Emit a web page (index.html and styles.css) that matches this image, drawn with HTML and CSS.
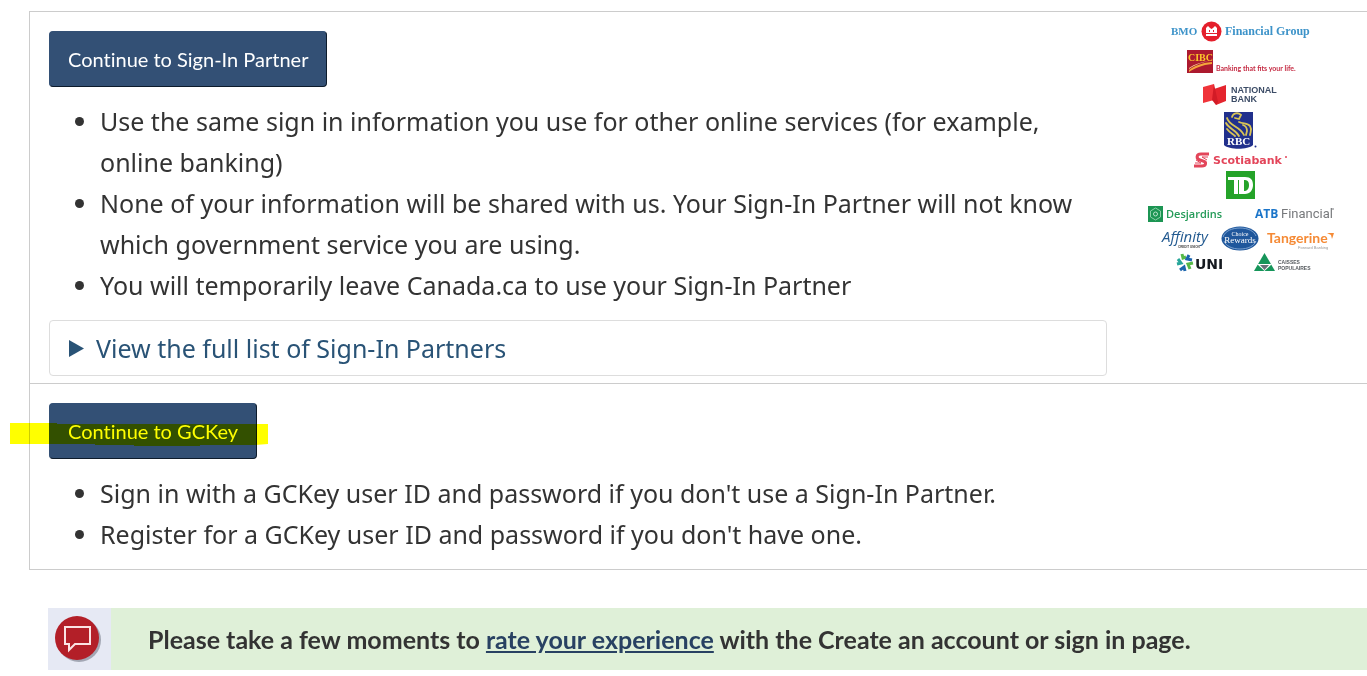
FILE: index.html
```html
<!DOCTYPE html>
<html lang="en">
<head>
<meta charset="utf-8">
<meta name="viewport" content="width=device-width, initial-scale=1">
<title>Create an account or sign in</title>
<link rel="stylesheet" href="styles.css">
</head>
<body>
<main class="options">
  <section class="option option-partner">
    <div class="option-body">
      <button type="button" class="btn">Continue to Sign-In Partner</button>
      <ul class="points">
        <li>Use the same sign in information you use for other online services (for example, online banking)</li>
        <li>None of your information will be shared with us. Your Sign-In Partner will not know which government service you are using.</li>
        <li>You will temporarily leave Canada.ca to use your Sign-In Partner</li>
      </ul>
      <details class="partners">
        <summary><svg class="arrow" viewBox="0 0 15 17" aria-hidden="true"><path d="M0 0 15 8.500 0 17Z" fill="#295376"/></svg>View the full list of Sign-In Partners</summary>
      </details>
    </div>
    <svg class="logos" viewBox="0 0 200 270" role="img" aria-label="Sign-In Partner logos">
      <g class="serif" font-weight="bold" fill="#3d93c9">
        <text x="31" y="25" font-size="11">BMO</text>
        <text x="85" y="25" font-size="12">Financial Group</text>
      </g>
      <circle cx="71.500" cy="21.500" r="10" fill="#e4202c"/>
      <path d="M66 26v-8l2-2 2 2 1.500 1 1.500-1 2-2 2 2v8Z" fill="#fff"/>
      <path d="M66 23.500h11M69.500 20v2M73.500 20v2" stroke="#e4202c" stroke-width="1"/>

      <path d="M47 40h26v23H47Z" fill="#ac1a2f"/>
      <path d="M49 60c5-4 12-7 23-8v2c-10 1-17 4-23 8Z" fill="#f3a73b"/>
      <path d="M49 58c6-4 12-6 20-7-9 2-14 4-20 8Z" fill="#f9d79a"/>
      <text class="serif" x="48" y="51" font-size="10" font-weight="bold" fill="#fcc72c">CIBC</text>
      <text class="lato" x="76" y="61" font-size="7" font-weight="bold" fill="#c52b43">Banking that fits your life.</text>

      <path d="M63 77 74 74v16l-11 3Z" fill="#f0343a"/>
      <path d="M74 79 86 75v16l-10 4Z" fill="#e4252e"/>
      <path d="m74 74 4 18-2 3-4-5Z" fill="#d21b26"/>
      <g class="sans" font-weight="bold" font-size="9" fill="#3c4c66">
        <text x="91" y="83">NATIONAL</text>
        <text x="91" y="92">BANK</text>
      </g>

      <path d="M84 102h29v33c-5 5-24 5-29 0Z" fill="#21308c"/>
      <g fill="none" stroke="#d9c456" stroke-width="1.800" stroke-linecap="round">
        <path d="M87 108c2 8 13 8 17 17"/>
        <path d="M86 113c3 6 10 7 13 13"/>
        <path d="M87 119c3 4 6 5 8 7"/>
        <path d="M92 107c1-4 6-5 9-2l-2 4-4-1"/>
        <path d="M99 112c4 2 9 1 11 4s1 4 0 9"/>
        <path d="M103 115c3 1 4 3 4 6l-1 4"/>
      </g>
      <text class="serif" x="87" y="135" font-size="11" font-weight="bold" fill="#fff">RBC</text>
      <circle cx="115.500" cy="136.500" r="1" fill="#21308c"/>

      <g fill="none" stroke="#e3455a">
        <path d="M69 144H61c-5 0-5 5-1 6l3 1c4 1 3 5-1 5h-8" stroke-width="3"/>
        <path d="M68 147h-6l5 3M55 153h6l-5-3" stroke-width="1"/>
      </g>
      <text class="dejavu" x="73" y="154" font-size="11" font-weight="bold" fill="#e3455a">Scotiabank</text>
      <circle cx="146" cy="147" r="1" fill="#e3455a"/>

      <path d="M86 161h29v28H86Z" fill="#25a329"/>
      <path d="M88 167h14v3h-4v14h-4v-14h-6Z" fill="#fff"/>
      <path d="M99 167h6c6 0 8 3 8 8s-3 9-8 9h-6Zm5 3v11c3 0 5-2 5-6s-2-5-5-5Z" fill="#fff" fill-rule="evenodd"/>
      <path d="M98.500 170v14" stroke="#25a329" stroke-width="1"/>

      <path d="M8 196h15v16H8Z" fill="#1c9553"/>
      <path d="m15.500 198 5 3v6l-5 3-5-3v-6Z" fill="none" stroke="#8bd0a8" stroke-width="1"/>
      <circle cx="15.500" cy="204" r="2" fill="none" stroke="#b9e3ca"/>
      <text class="humanist" x="26" y="208" font-size="11" font-weight="600" fill="#249b58">Desjardins</text>

      <text class="humanist" x="115" y="208" font-size="12" font-weight="bold" fill="#1b75c9">ATB</text>
      <text class="roboto" x="141" y="208" font-size="13" fill="#77797c">Financial</text>
      <path d="M193 198v2" stroke="#77797c"/>

      <text class="humanist" x="22" y="232" font-size="15" font-style="italic" fill="#235a90">Affinity</text>
      <text class="sans" x="38" y="238" font-size="3" font-weight="bold" fill="#444">CREDIT UNION</text>
      <ellipse cx="100" cy="228.500" rx="18.500" ry="12" fill="#1f579c"/>
      <path d="M83 227c2-6 9-9 17-9s14 3 16 8M84 231c2 5 8 8 16 8s14-3 16-8" fill="none" stroke="#7aa1d0" stroke-width="1"/>
      <g class="serif" fill="#fff" text-anchor="middle">
        <text x="100" y="226" font-size="6">Choice</text>
        <text x="100" y="233" font-size="9">Rewards</text>
      </g>
      <text class="lato" x="127" y="233" font-size="14" font-weight="bold" fill="#f58a35">Tangerine</text>
      <path d="M187 223h7l-2 6-1-4Z" fill="#f58a35"/>
      <text class="sans" x="158" y="239" font-size="4" fill="#999">Forward Banking</text>

      <g fill="none" stroke-width="3">
        <path d="M42 244l1 4 3-1" stroke="#55b947"/>
        <path d="m49 245-2 4 5 1" stroke="#1c65ae"/>
        <path d="m53 253-5 1 2 5" stroke="#55b947"/>
        <path d="m45 261-1-4-4 3" stroke="#1c65ae"/>
        <path d="m37 254 4-1-3-4" stroke="#27a69a"/>
      </g>
      <text class="dejavu" x="55" y="259" font-size="14" font-weight="bold" fill="#161a20">UNI</text>

      <path d="m124.500 243 10.500 18h-21Z" fill="#16955a"/>
      <path d="M117 254h15l-7.500 7Z" fill="#fff"/>
      <path d="M120 255h9l-4.500 5Z" fill="#687078"/>
      <g class="sans" fill="#555a5e" font-size="5" font-weight="bold">
        <text x="138" y="254">CAISSES</text>
        <text x="138" y="260">POPULAIRES</text>
      </g>
    </svg>
  </section>
  <section class="option option-gckey">
    <div class="option-body">
      <div class="marked">
        <button type="button" class="btn">Continue to GCKey</button>
        <svg class="marker" viewBox="0 0 258 23" preserveAspectRatio="none" aria-hidden="true"><path d="M0 0H47V1H258V21L245 22H190V23H124V22H85V21H0Z" fill="#ff0"/></svg>
      </div>
      <ul class="points">
        <li>Sign in with a GCKey user ID and password if you don't use a Sign-In Partner.</li>
        <li>Register for a GCKey user ID and password if you don't have one.</li>
      </ul>
    </div>
  </section>
</main>
<aside class="feedback">
  <div class="feedback-icon">
    <svg viewBox="0 0 48 48" aria-hidden="true">
      <circle cx="25" cy="25" r="22" fill="#777b88" opacity=".6"/>
      <circle cx="23" cy="23" r="22" fill="#b31f28"/>
      <path d="M11 12H36V29H21L15 35V29H11Z" fill="none" stroke="#fbe3e3" stroke-width="2"/>
    </svg>
  </div>
  <p>Please take a few moments to <a href="#rate">rate your experience</a> with the Create an account or sign in page.</p>
</aside>
</body>
</html>
```
FILE: styles.css
```css
* { box-sizing: border-box; }

body {
  margin: 0;
  padding-top: 11px;
  background: #fff;
  color: #333;
  font-family: "Noto Sans", "Open Sans", sans-serif;
  font-size: 25px;
  line-height: 41px;
  overflow-x: hidden;
}

.options {
  margin-left: 29px;
  border: solid #ccc;
  border-width: 1px 0 1px 1px;
}

.option {
  display: flex;
  padding: 19px 27px 7px 19px;
}

.option + .option {
  border-top: 1px solid #ccc;
  padding-bottom: 14px;
}

.option-body { flex: 1; }

.btn {
  display: block;
  padding: 14px 18px;
  border: 1px solid #335075;
  border-right-color: #0d1b2b;
  border-bottom-color: #0d1b2b;
  border-radius: 4px;
  background: #335075;
  color: #fff;
  font-family: Lato, sans-serif;
  font-size: 20px;
  font-variant-ligatures: none;
  line-height: 26px;
}

.points {
  margin: 14px 0 0;
  padding: 0 0 0 51px;
}

.partners {
  margin-top: 14px;
  border: 1px solid #ddd;
  border-radius: 4px;
  color: #295376;
}

.partners summary {
  display: flex;
  align-items: center;
  gap: 12px;
  padding: 7px 19px 6px;
  list-style: none;
  cursor: pointer;
}

.partners summary::-webkit-details-marker { display: none; }

.arrow {
  width: 15px;
  height: 17px;
}

.logos {
  width: 200px;
  height: 270px;
  margin: -21px 0 0 33px;
}

.serif { font-family: "Liberation Serif", serif; }
.sans { font-family: "Liberation Sans", sans-serif; }
.humanist { font-family: "Open Sans", sans-serif; }
.roboto { font-family: Roboto, sans-serif; }
.lato { font-family: Lato, sans-serif; }
.dejavu { font-family: "DejaVu Sans", sans-serif; }

.marked {
  position: relative;
  width: fit-content;
}

.marker {
  position: absolute;
  top: 20px;
  left: -39px;
  width: 258px;
  height: 23px;
  mix-blend-mode: multiply;
  pointer-events: none;
}

.feedback {
  display: flex;
  align-items: center;
  margin: 38px 0 0 48px;
  background: #dff0d8;
  font-family: Lato, sans-serif;
  font-size: 25px;
  font-variant-ligatures: none;
  font-weight: bold;
}

.feedback-icon {
  display: flex;
  align-items: center;
  width: 63px;
  height: 62px;
  padding-left: 6px;
  background: #e6e9f4;
}

.feedback-icon svg {
  width: 48px;
  height: 48px;
}

.feedback p { margin: 0 0 0 37px; }
.feedback a { color: #284162; }
```
